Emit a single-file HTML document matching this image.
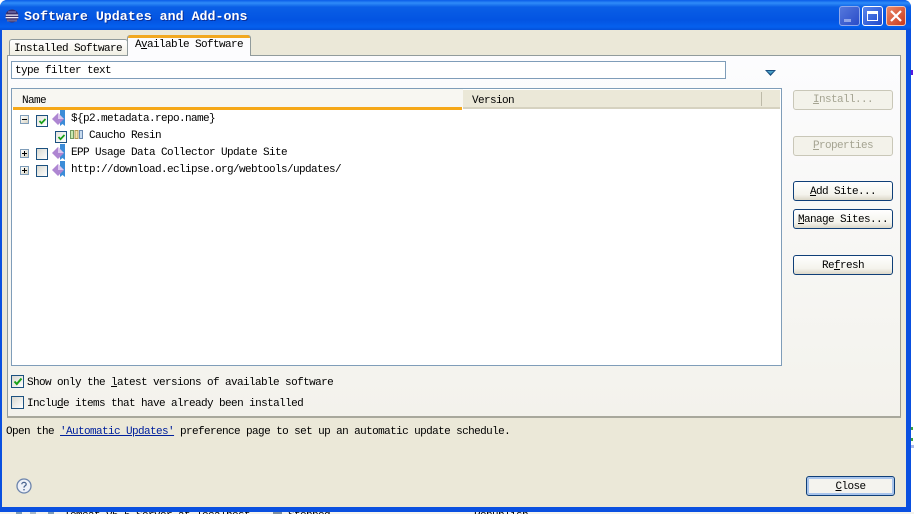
<!DOCTYPE html>
<html><head><meta charset="utf-8">
<style>
html,body{margin:0;padding:0;width:914px;height:514px;overflow:hidden;background:#fff}
*{box-sizing:border-box}
div,span.t{position:absolute}
.t{font-family:"Liberation Mono","Noto Sans CJK SC",monospace;font-size:11px;letter-spacing:-.6px;line-height:14px;color:#000;white-space:pre}
u{text-underline-offset:1px}
.btn{position:absolute;left:793px;width:100px;height:20px;border:1px solid #0f3f78;border-radius:3px;background:linear-gradient(#fff,#f4f3ec 70%,#dcd8c8);text-align:center;font-family:"Liberation Mono",monospace;font-size:11px;letter-spacing:-.6px;line-height:20px;color:#000;white-space:pre}
.dis{border-color:#c9c7b8;background:#f3f2ea;color:#a5a492;line-height:19px}
.cb{width:13px;height:13px;border:1px solid #1c5180;background:linear-gradient(135deg,#d8d8d0,#fff)}
.pm{width:9px;height:9px;border:1px solid #7f9db9;background:linear-gradient(135deg,#fff,#d8d4c4)}
.pm i{position:absolute;left:1px;top:3px;width:5px;height:1px;background:#000}
.pm b{position:absolute;left:3px;top:1px;width:1px;height:5px;background:#000}
svg{position:absolute;display:block}
</style></head><body>
<!-- window -->
<div style="left:0;top:0;width:911px;height:512px;background:#0a50e0;border-radius:7px 7px 0 0"></div>
<div style="left:0;top:0;width:911px;height:30px;background:linear-gradient(#0a5ce8 0,#2f8cf8 3px,#0a5fe6 7px,#0354e2 20px,#0560ee 27px,#0450d8 30px);border-radius:7px 7px 0 0"></div>
<div style="left:2px;top:30px;width:904px;height:477px;background:#ebe8d8"></div>
<!-- background behind window -->
<div style="left:0;top:512px;width:914px;height:2px;overflow:hidden;background:#f4f3ee">
<span class="t" style="left:64px;top:-3px">Tomcat v5.5 Server at localhost</span>
<span class="t" style="left:288px;top:-3px">Stopped</span>
<span class="t" style="left:474px;top:-3px">Republish</span>
<div style="left:16px;top:0;width:6px;height:2px;background:#7f9db9"></div>
<div style="left:30px;top:0;width:6px;height:2px;background:#a8b8c8"></div>
<div style="left:48px;top:0;width:6px;height:2px;background:#7f9db9"></div>
<div style="left:273px;top:0;width:9px;height:2px;background:#8090a0"></div>
</div>
<div style="left:911px;top:70px;width:2px;height:5px;background:#5a1ae0"></div>
<div style="left:911px;top:427px;width:2px;height:3px;background:#40a040"></div>
<div style="left:911px;top:438px;width:2px;height:3px;background:#40a040"></div>
<div style="left:911px;top:445px;width:3px;height:3px;background:#a8b8e8"></div>

<svg style="left:5px;top:9px" width="14" height="14" viewBox="0 0 14 14"><circle cx="7" cy="7" r="6.5" fill="#38306e"/><path d="M.8 5.5h12.4v1.2H.8zM.6 8h12.8v1.2H.6z" fill="#f0ecf6"/><path d="M3 2.5h8v1H3z" fill="#8a86c0"/><path d="M2 10.5h10v2H2z" fill="#6a6494"/></svg>
<span class="t" style="left:24px;top:9px;font-size:13.3px;letter-spacing:0;line-height:16px;color:#fff;font-weight:bold;text-shadow:1px 1px 0 #0a2f98">Software Updates and Add-ons</span>

<!-- window buttons -->
<div style="left:839px;top:6px;width:21px;height:20px;border:1px solid #8fa8ec;border-radius:3px;background:linear-gradient(135deg,#5578dc,#2a4cc8)"><div style="left:4px;top:12px;width:7px;height:3px;background:#8fa4e8"></div></div>
<div style="left:862px;top:6px;width:21px;height:20px;border:1px solid #fff;border-radius:3px;background:linear-gradient(135deg,#5a86ec,#1f48cc)"><div style="left:4px;top:4px;width:11px;height:10px;border:1px solid #fff;border-top-width:3px"></div></div>
<div style="left:886px;top:6px;width:20px;height:20px;border:1px solid #f4c8b8;border-radius:3px;background:linear-gradient(135deg,#ec8a68,#c8381c)"><svg style="left:3px;top:3px" width="12" height="12" viewBox="0 0 12 12"><path d="M1 1l10 10M11 1L1 11" stroke="#fff" stroke-width="2.2"/></svg></div>

<!-- tabs -->
<div style="left:9px;top:39px;width:119px;height:17px;background:linear-gradient(#fff,#f0eee2);border:1px solid #919b9c;border-bottom:0;border-radius:3px 3px 0 0"></div>
<span class="t" style="left:14px;top:42px">Installed Software</span>

<!-- panel -->
<div style="left:7px;top:55px;width:894px;height:363px;background:linear-gradient(#fcfcfe,#f3f2ec);border:1px solid #919b9c;border-right-color:#9a9a90;border-bottom:2px solid #a8a89c"></div>
<div style="left:127px;top:35px;width:124px;height:21px;background:#fcfcfe;border:1px solid #919b9c;border-bottom:0;border-radius:3px 3px 0 0"></div>
<div style="left:128px;top:35px;width:122px;height:3px;background:#f2a820;border-radius:3px 3px 0 0"></div>
<span class="t" style="left:135px;top:38px">A<u>v</u>ailable Software</span>

<!-- filter -->
<div style="left:11px;top:61px;width:715px;height:18px;background:#fff;border:1px solid #7f9db9"></div>
<span class="t" style="left:15px;top:64px">type filter text</span>
<svg style="left:765px;top:70px" width="11" height="6" viewBox="0 0 11 6"><path d="M0 0h11L5.5 6z" fill="#1a4f80"/><path d="M2 1h7L5.5 4z" fill="#4aa0c8"/></svg>

<!-- table -->
<div style="left:11px;top:88px;width:771px;height:278px;background:#fff;border:1px solid #7f9db9"></div>
<div style="left:12px;top:89px;width:451px;height:18px;background:#f8f7f2"></div>
<div style="left:13px;top:107px;width:449px;height:3px;background:#f6a818"></div>
<div style="left:463px;top:90px;width:317px;height:17px;background:#ebe8d8"></div>
<div style="left:463px;top:107px;width:317px;height:2px;background:#d6d2c0"></div>
<div style="left:761px;top:92px;width:1px;height:14px;background:#bdbaa8"></div>
<span class="t" style="left:22px;top:94px">Name</span>
<span class="t" style="left:472px;top:94px">Version</span>

<!-- tree -->
<div class="pm" style="left:20px;top:115px"><i></i></div>
<div class="cb" style="left:36px;top:115px;width:12px;height:12px;background:linear-gradient(135deg,#e4e4de,#fff)"><svg style="left:1px;top:1px" width="9" height="9" viewBox="0 0 9 9"><path d="M1.5 4l2 2.2L7.5 2" stroke="#18a018" stroke-width="1.7" fill="none"/></svg></div>
<svg style="left:51px;top:110px" width="16" height="17" viewBox="0 0 16 17"><path d="M9 0h5v16l-2.5-2L9 16z" fill="#3c8cd8"/><path d="M1 9l6-6 6 6-6 6z" fill="#ae86d2"/><path d="M7 3l6 6H7z" fill="#dcc8ee"/></svg>
<span class="t" style="left:71px;top:112px">${p2.metadata.repo.name}</span>

<div class="cb" style="left:55px;top:131px;width:12px;height:12px;background:linear-gradient(135deg,#e4e4de,#fff)"><svg style="left:1px;top:1px" width="9" height="9" viewBox="0 0 9 9"><path d="M1.5 4l2 2.2L7.5 2" stroke="#18a018" stroke-width="1.7" fill="none"/></svg></div>
<svg style="left:70px;top:130px" width="14" height="10" viewBox="0 0 14 10"><rect x=".5" y=".5" width="3" height="8" fill="#c8e8b0" stroke="#709860"/><rect x="5" y=".5" width="3" height="8" fill="#f4e4b0" stroke="#b09850"/><rect x="9.5" y=".5" width="3" height="8" fill="#c8dcf0" stroke="#6888b0"/></svg>
<span class="t" style="left:89px;top:129px">Caucho Resin</span>

<div class="pm" style="left:20px;top:149px"><i></i><b></b></div>
<div class="cb" style="left:36px;top:148px;width:12px;height:12px"></div>
<svg style="left:51px;top:144px" width="16" height="17" viewBox="0 0 16 17"><path d="M9 0h5v16l-2.5-2L9 16z" fill="#3c8cd8"/><path d="M1 9l6-6 6 6-6 6z" fill="#ae86d2"/><path d="M7 3l6 6H7z" fill="#dcc8ee"/></svg>
<span class="t" style="left:71px;top:146px">EPP Usage Data Collector Update Site</span>

<div class="pm" style="left:20px;top:166px"><i></i><b></b></div>
<div class="cb" style="left:36px;top:165px;width:12px;height:12px"></div>
<svg style="left:51px;top:161px" width="16" height="17" viewBox="0 0 16 17"><path d="M9 0h5v16l-2.5-2L9 16z" fill="#3c8cd8"/><path d="M1 9l6-6 6 6-6 6z" fill="#ae86d2"/><path d="M7 3l6 6H7z" fill="#dcc8ee"/></svg>
<span class="t" style="left:71px;top:163px">http://download.eclipse.org/webtools/updates/</span>

<!-- side buttons -->
<div class="btn dis" style="top:90px"><u>I</u>nstall...</div>
<div class="btn dis" style="top:136px"><u>P</u>roperties</div>
<div class="btn" style="top:181px"><u>A</u>dd Site...</div>
<div class="btn" style="top:209px"><u>M</u>anage Sites...</div>
<div class="btn" style="top:255px">Re<u>f</u>resh</div>

<!-- checks -->
<div class="cb" style="left:11px;top:375px"><svg style="left:1px;top:1px" width="10" height="10" viewBox="0 0 10 10"><path d="M1.5 4.5l2.3 2.5L8.5 1.5" stroke="#18a018" stroke-width="2" fill="none"/></svg></div>
<span class="t" style="left:27px;top:376px">Show only the <u>l</u>atest versions of available software</span>
<div class="cb" style="left:11px;top:396px"></div>
<span class="t" style="left:27px;top:397px">Inclu<u>d</u>e items that have already been installed</span>

<span class="t" style="left:6px;top:425px">Open the <u style="color:#00209c">'Automatic Updates'</u> preference page to set up an automatic update schedule.</span>

<svg style="left:16px;top:478px" width="16" height="16" viewBox="0 0 16 16"><circle cx="8" cy="8" r="7" fill="#eef1f8" stroke="#6c84ac" stroke-width="1.3"/><path d="M5.8 6.2C5.8 3.8 10.2 3.8 10.2 6.2 10.2 7.8 8 7.8 8 9.6" stroke="#4a6490" stroke-width="1.3" fill="none"/><path d="M7.3 11h1.4v1.4H7.3z" fill="#4a6490"/></svg>

<div class="btn" style="left:806px;top:476px;width:89px;height:20px;border-color:#0f3f78;background:#f4f3ee;box-shadow:inset 0 0 0 2px #a8c4ec"><u>C</u>lose</div>
</body></html>
